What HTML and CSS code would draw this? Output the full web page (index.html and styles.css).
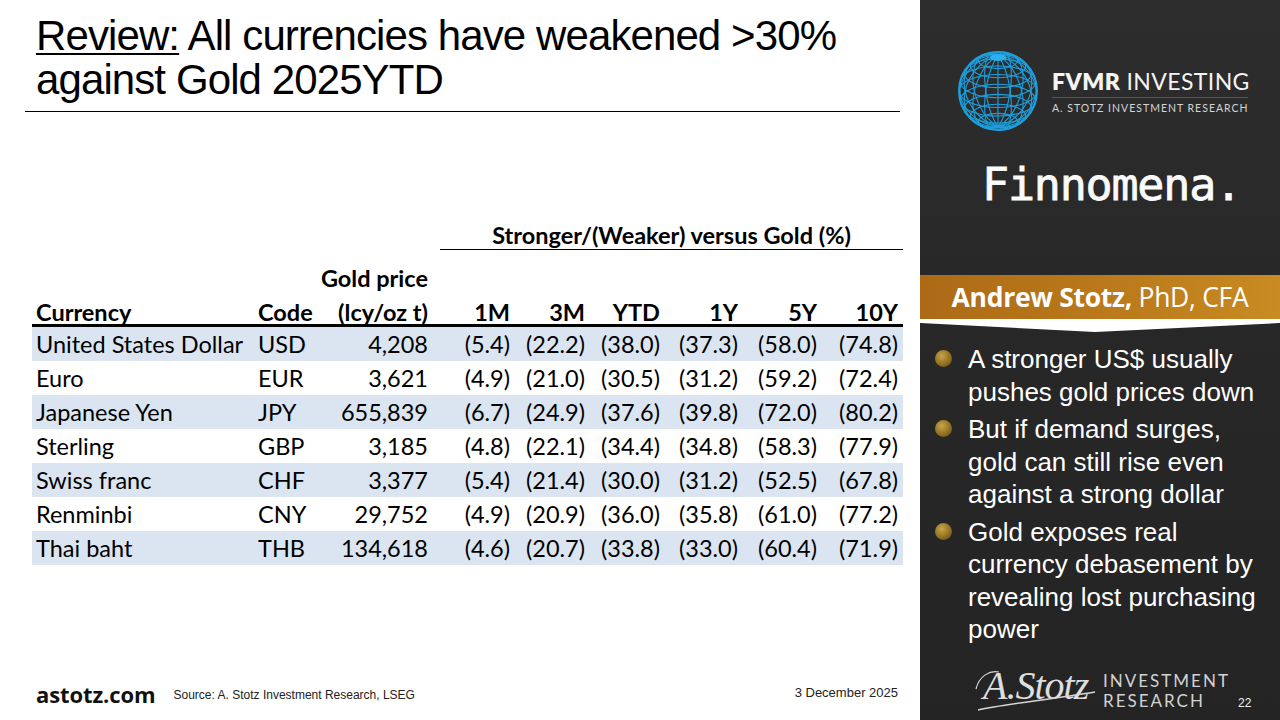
FILE: index.html
```html
<!DOCTYPE html>
<html lang="en">
<head>
<meta charset="utf-8">
<title>Review: All currencies have weakened against Gold</title>
<link rel="stylesheet" href="styles.css">
</head>
<body>
<div class="main">
  <div class="title-block">
    <h1><span class="ul">Review:</span> All currencies have weakened &gt;30% against Gold 2025YTD</h1>
  </div>
  <div class="table-wrap">
    <table class="fx">
      <colgroup>
        <col class="c-cur"><col class="c-code"><col class="c-gold">
        <col class="c-1m"><col class="c-3m"><col class="c-ytd"><col class="c-1y"><col class="c-5y"><col class="c-10y">
      </colgroup>
      <thead>
        <tr class="r-super">
          <th colspan="3"></th>
          <th colspan="6" class="super"><div>Stronger/(Weaker) versus Gold (%)</div></th>
        </tr>
        <tr class="r-head">
          <th class="l">Currency</th>
          <th class="l code">Code</th>
          <th class="gold"><span class="gp1">Gold price</span>(lcy/oz t)</th>
          <th>1M</th><th>3M</th><th>YTD</th><th>1Y</th><th>5Y</th><th>10Y</th>
        </tr>
      </thead>
      <tbody>
        <tr class="alt"><td class="l">United States Dollar</td><td class="l code">USD</td><td>4,208</td><td>(5.4)</td><td>(22.2)</td><td>(38.0)</td><td>(37.3)</td><td>(58.0)</td><td>(74.8)</td></tr>
        <tr><td class="l">Euro</td><td class="l code">EUR</td><td>3,621</td><td>(4.9)</td><td>(21.0)</td><td>(30.5)</td><td>(31.2)</td><td>(59.2)</td><td>(72.4)</td></tr>
        <tr class="alt"><td class="l">Japanese Yen</td><td class="l code">JPY</td><td>655,839</td><td>(6.7)</td><td>(24.9)</td><td>(37.6)</td><td>(39.8)</td><td>(72.0)</td><td>(80.2)</td></tr>
        <tr><td class="l">Sterling</td><td class="l code">GBP</td><td>3,185</td><td>(4.8)</td><td>(22.1)</td><td>(34.4)</td><td>(34.8)</td><td>(58.3)</td><td>(77.9)</td></tr>
        <tr class="alt"><td class="l">Swiss franc</td><td class="l code">CHF</td><td>3,377</td><td>(5.4)</td><td>(21.4)</td><td>(30.0)</td><td>(31.2)</td><td>(52.5)</td><td>(67.8)</td></tr>
        <tr><td class="l">Renminbi</td><td class="l code">CNY</td><td>29,752</td><td>(4.9)</td><td>(20.9)</td><td>(36.0)</td><td>(35.8)</td><td>(61.0)</td><td>(77.2)</td></tr>
        <tr class="alt"><td class="l">Thai baht</td><td class="l code">THB</td><td>134,618</td><td>(4.6)</td><td>(20.7)</td><td>(33.8)</td><td>(33.0)</td><td>(60.4)</td><td>(71.9)</td></tr>
      </tbody>
    </table>
  </div>
  <div class="footer">
    <span class="site">astotz.com</span>
    <span class="source">Source: A. Stotz Investment Research, LSEG</span>
    <span class="date">3 December 2025</span>
  </div>
</div>

<div class="side">
  <div class="logo">
    <svg class="globe" width="82" height="82" viewBox="-41 -41 82 82" aria-hidden="true">
      <g fill="none" stroke="#1e9fdc" stroke-width="1.1">
        <circle cx="0" cy="0" r="39" stroke-width="2"/>
        <ellipse cx="0" cy="-30.6" rx="19.5" ry="8.25"/>
        <ellipse cx="0" cy="-25" rx="27.6" ry="11.7"/>
        <ellipse cx="0" cy="-17.7" rx="33.8" ry="14.3"/>
        <ellipse cx="0" cy="-9.15" rx="37.7" ry="15.9"/>
        <ellipse cx="0" cy="0" rx="39" ry="16.5"/>
        <ellipse cx="0" cy="9.15" rx="37.7" ry="15.9"/>
        <ellipse cx="0" cy="17.7" rx="33.8" ry="14.3"/>
        <ellipse cx="0" cy="25" rx="27.6" ry="11.7"/>
        <ellipse cx="0" cy="30.6" rx="19.5" ry="8.25"/>
        <line x1="0" y1="-39" x2="0" y2="39"/>
        <ellipse cx="0" cy="0" rx="12.1" ry="39" transform="rotate(-8.74)"/>
        <ellipse cx="0" cy="0" rx="22.7" ry="39" transform="rotate(-19.5)"/>
        <ellipse cx="0" cy="0" rx="30.6" ry="39" transform="rotate(-36.2)"/>
        <ellipse cx="0" cy="0" rx="34.8" ry="39" transform="rotate(-67.3)"/>
        <ellipse cx="0" cy="0" rx="34.8" ry="39" transform="rotate(67.3)"/>
        <ellipse cx="0" cy="0" rx="30.6" ry="39" transform="rotate(36.2)"/>
        <ellipse cx="0" cy="0" rx="22.7" ry="39" transform="rotate(19.5)"/>
        <ellipse cx="0" cy="0" rx="12.1" ry="39" transform="rotate(8.74)"/>
      </g>
      <ellipse cx="0" cy="-33.5" rx="8" ry="3.4" fill="#2bb0ec"/>
    </svg>
    <div class="fv-text">
      <div class="fv-title"><b>FVMR</b> INVESTING</div>
      <div class="fv-rule"></div>
      <div class="fv-sub">A. STOTZ INVESTMENT RESEARCH</div>
    </div>
  </div>
  <div class="finno">Finnomena.</div>
  <div class="banner"><b>Andrew Stotz,</b> PhD, CFA</div>
  <svg class="chevron" width="360" height="14" viewBox="0 0 360 14" aria-hidden="true">
    <polygon points="0,0 360,0 360,4 175,13 0,4" fill="#ffffff"/>
  </svg>
  <ul class="bullets">
    <li>A stronger US$ usually pushes gold prices down</li>
    <li>But if demand surges, gold can still rise even against a strong dollar</li>
    <li>Gold exposes real currency debasement by revealing lost purchasing power</li>
  </ul>
  <div class="side-foot">
    <svg class="sig" width="124" height="52" viewBox="0 0 124 52" aria-hidden="true">
      <text x="8" y="36" class="sig-text">A.Stotz</text>
      <path d="M3 47 C 30 41, 72 37, 120 29" fill="none" stroke="#d6d6d6" stroke-width="1.4"/>
      <path d="M1 26 C 4 13, 15 7, 24 9" fill="none" stroke="#d6d6d6" stroke-width="1.2"/>
    </svg>
    <div class="ir">
      <div class="ir-line">INVESTMENT</div>
      <div class="ir-line">RESEARCH</div>
    </div>
    <div class="pg">22</div>
  </div>
</div>
</body>
</html>
```

FILE: styles.css
```css
html, body {
  margin: 0;
  padding: 0;
}
body {
  width: 1280px;
  height: 720px;
  display: flex;
  overflow: hidden;
  font-family: "Liberation Sans", Arial, sans-serif;
  background: #fff;
}

/* ---------- left / main ---------- */
.main {
  width: 920px;
  display: flex;
  flex-direction: column;
  background: #fff;
}
.title-block {
  margin: 0 20px 0 25px;
  padding: 14px 0 9px 11px;
  border-bottom: 1.5px solid #000;
}
.title-block h1 {
  margin: 0;
  font-family: "Liberation Sans", Arial, sans-serif;
  font-weight: 400;
  font-size: 42px;
  line-height: 44px;
  color: #000;
  letter-spacing: -0.9px;
}
.ul {
  display: inline-block;
  height: 44px;
  text-decoration: underline;
  text-decoration-thickness: 2px;
  text-underline-offset: 3px;
}

.table-wrap {
  margin-top: 111px;
  padding-left: 32px;
}
.fx {
  width: 871px;
  table-layout: fixed;
  border-collapse: separate;
  border-spacing: 0;
  font-family: Lato, "Open Sans", sans-serif;
  font-size: 23.5px;
  color: #000;
}
.c-cur { width: 220px; }
.c-code { width: 60px; }
.c-gold { width: 121px; }
.c-1m { width: 82px; }
.c-3m { width: 75px; }
.c-ytd { width: 75px; }
.c-1y { width: 78px; }
.c-5y { width: 79px; }
.c-10y { width: 81px; }

.fx th, .fx td {
  padding: 0 5px;
  text-align: right;
  white-space: nowrap;
}
.fx .l { text-align: left; padding-left: 4px; }
.fx .code { padding-left: 6px; }

.r-super th {
  font-weight: 700;
  line-height: 24px;
  padding: 0 0 2px;
}
.r-super .super div {
  margin-left: 7px;
  border-bottom: 1px solid #000;
  text-align: center;
  padding-bottom: 2px;
}
.r-head th {
  font-weight: 700;
  line-height: 24px;
  vertical-align: bottom;
  border-bottom: 3px solid #000;
  padding-bottom: 0;
}
.r-head th.gold { padding-top: 14px; }
.gp1 {
  display: block;
  margin-bottom: 10px;
}
.fx td {
  height: 34px;
  line-height: 34px;
  padding-top: 0;
  padding-bottom: 0;
}
.fx tr.alt td { background: #dbe5f1; }

.footer {
  margin-top: auto;
  height: 52px;
  display: flex;
  align-items: center;
  padding: 0 22px 0 36px;
}
.site {
  font-family: "Open Sans", sans-serif;
  font-weight: 700;
  font-size: 22px;
  letter-spacing: -0.1px;
  color: #111;
}
.source {
  margin-left: 18px;
  font-size: 12px;
  color: #222;
  padding-top: 2px;
}
.date {
  margin-left: auto;
  font-size: 13px;
  color: #222;
  padding-bottom: 4px;
}

/* ---------- right / side ---------- */
.side {
  width: 360px;
  display: flex;
  flex-direction: column;
  background: linear-gradient(180deg, #2d2d2d 0%, #272727 50%, #242424 100%);
  color: #fff;
}
.logo {
  margin-top: 50px;
  padding-left: 37px;
  display: flex;
  align-items: center;
  gap: 13px;
}
.globe { display: block; flex: none; }
.fv-text { width: 196px; }
.fv-title {
  font-family: Lato, "Open Sans", sans-serif;
  font-size: 23px;
  line-height: 26px;
  letter-spacing: 0.4px;
  color: #f4f4f4;
  white-space: nowrap;
}
.fv-title b { font-weight: 800; }
.fv-rule {
  height: 1px;
  background: #3d5d72;
  margin: 3px 0 3px;
}
.fv-sub {
  font-family: Lato, "Open Sans", sans-serif;
  font-size: 10.5px;
  line-height: 14px;
  letter-spacing: 1px;
  color: #d4d4d4;
  white-space: nowrap;
}
.finno {
  margin-top: 28px;
  padding-left: 62px;
  font-family: "DejaVu Sans Mono", "Liberation Mono", monospace;
  font-weight: 400;
  font-size: 45px;
  line-height: 50px;
  letter-spacing: -1.2px;
  color: #fafafa;
  -webkit-text-stroke: 0.8px #fafafa;
}
.banner {
  margin-top: 65px;
  height: 44px;
  line-height: 44px;
  text-align: center;
  background: linear-gradient(90deg, #ad6a16 0%, #bb7a1b 55%, #c98b22 100%);
  font-family: "Open Sans", sans-serif;
  font-size: 26.5px;
  color: #fff;
  letter-spacing: -0.3px;
  white-space: nowrap;
}
.banner b { font-weight: 700; }
.chevron { display: block; }
.bullets {
  list-style: none;
  margin: 10px 0 0;
  padding: 0 14px 0 48px;
}
.bullets li {
  position: relative;
  font-family: "Liberation Sans", Arial, sans-serif;
  font-size: 26px;
  line-height: 32.5px;
  margin-bottom: 5px;
  color: #fff;
}
.bullets li::before {
  content: "";
  position: absolute;
  left: -33px;
  top: 7px;
  width: 17px;
  height: 17px;
  border-radius: 50%;
  background: radial-gradient(circle at 40% 35%, #c9a64c 0%, #9c7a26 45%, #5e4712 100%);
}
.side-foot {
  margin-top: auto;
  height: 62px;
  display: flex;
  align-items: center;
  padding-left: 55px;
}
.sig { display: block; flex: none; }
.sig-text {
  font-family: "Liberation Serif", serif;
  font-style: italic;
  font-size: 40px;
  fill: #dedede;
  letter-spacing: -1px;
}
.ir {
  margin-left: 4px;
  font-family: Lato, "Open Sans", sans-serif;
  font-size: 17px;
  letter-spacing: 2px;
  color: #d2d2d2;
  padding-top: 4px;
}
.ir-line {
  line-height: 20px;
}
.pg {
  margin-left: 8px;
  padding-top: 28px;
  font-size: 12px;
  color: #eee;
}
```
